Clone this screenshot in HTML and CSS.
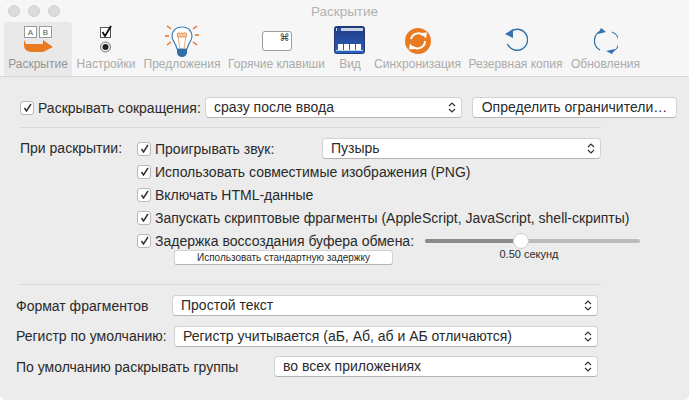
FILE: index.html
```html
<!DOCTYPE html>
<html lang="ru">
<head>
  <meta charset="UTF-8">
  <title>Раскрытие</title>
  <link rel="stylesheet" href="styles.css">
</head>
<body>
  <div class="window">
    <div class="titlebar">
      <div class="lights"><span></span><span></span><span></span></div>
      <div class="title">Раскрытие</div>
    </div>

    <div class="toolbar">
      <div class="tab active">
        <svg class="icon" width="32" height="32" viewBox="0 0 32 32">
          <rect x="2.5" y="1.5" width="12" height="11" fill="#fff" stroke="#9a9a9a"/>
          <rect x="17.5" y="1.5" width="12" height="11" fill="#fff" stroke="#9a9a9a"/>
          <text x="8.5" y="10" class="key-letter">A</text>
          <text x="23.5" y="10" class="key-letter">B</text>
          <path d="M2 15 L4 19 L21 19 L21 15 L31 22 L21 27 L21 27 L10 27 Q2 27 2 20 Z" fill="#e87a22"/>
        </svg>
        <span>Раскрытие</span>
      </div>
      <div class="tab">
        <svg class="icon" width="14" height="32" viewBox="0 0 14 32">
          <rect x="1.5" y="2.5" width="10" height="10" fill="#fff" stroke="#555"/>
          <path d="M3.5 7 L6 11 L12 1" fill="none" stroke="#111" stroke-width="1.8"/>
          <circle cx="6.5" cy="22" r="5" fill="#eee" stroke="#777"/>
          <circle cx="6.5" cy="22" r="3" fill="#222"/>
        </svg>
        <span>Настройки</span>
      </div>
      <div class="tab">
        <svg class="icon" width="34" height="34" viewBox="0 0 34 34">
          <path d="M17 3 C10 3 7 8 7 12 C7 17 11 19 12 25 L22 25 C23 19 27 17 27 12 C27 8 24 3 17 3 Z" fill="#fff" stroke="#3f7fb5" stroke-width="1.2"/>
          <path d="M13 12 L15 25 M21 12 L19 25" stroke="#f0a878" fill="none"/>
          <path d="M12 10 Q14 7 15 10 Q17 7 18 10 Q20 7 22 10 L21 13 L13 13 Z" fill="#f6c9a8" stroke="#e87a22" stroke-width="0.7"/>
          <path d="M12 25 L22 25 L22 29 Q21 33 17 33 Q13 33 12 29 Z" fill="#2f6fa8"/>
          <path d="M2 2 L6 5 M32 2 L28 5 M0 12 L4 12 M30 11 L34 11 M2 21 L6 18 M32 21 L28 18" stroke="#e8702a" stroke-width="1.4" fill="none"/>
        </svg>
        <span>Предложения</span>
      </div>
      <div class="tab">
        <svg class="icon" width="30" height="32" viewBox="0 0 30 32">
          <rect x="0.5" y="6.5" width="29" height="19" rx="2.5" fill="#fff" stroke="#9c9c9c"/>
          <text x="22.5" y="16" class="cmd">⌘</text>
        </svg>
        <span>Горячие клавиши</span>
      </div>
      <div class="tab">
        <svg class="icon" width="32" height="32" viewBox="0 0 32 32">
          <defs>
            <linearGradient id="viewBg" x1="0" y1="0" x2="0" y2="1">
              <stop offset="0" stop-color="#1f3a80"/>
              <stop offset="1" stop-color="#2a62c0"/>
            </linearGradient>
          </defs>
          <rect x="0.5" y="1.5" width="30" height="27" rx="2" fill="url(#viewBg)" stroke="#1e3a70"/>
          <rect x="2" y="3" width="27" height="3" fill="#c8d2e6"/>
          <rect x="3" y="3" width="4" height="3" fill="#2a4ab0"/>
          <rect x="4" y="19" width="5" height="6" fill="#fff"/>
          <rect x="10" y="19" width="5" height="6" fill="#fff"/>
          <rect x="16" y="19" width="5" height="6" fill="#fff"/>
          <rect x="22" y="19" width="5" height="6" fill="#fff"/>
          <rect x="2" y="25" width="27" height="1" fill="#b8cdf0"/>
        </svg>
        <span>Вид</span>
      </div>
      <div class="tab">
        <svg class="icon" width="26" height="32" viewBox="0 0 26 32">
          <circle cx="13" cy="16" r="13" fill="#e87a22"/>
          <path d="M6 14 A7.5 7.5 0 0 1 18.5 10.5" fill="none" stroke="#fff" stroke-width="2"/>
          <path d="M20 16 A7.5 7.5 0 0 1 7.5 21.5" fill="none" stroke="#fff" stroke-width="2"/>
          <path d="M16 8 L22 7.5 L21 13.5 Z" fill="#fff"/>
          <path d="M10 24 L4 24.5 L5 18.5 Z" fill="#fff"/>
        </svg>
        <span>Синхронизация</span>
      </div>
      <div class="tab">
        <svg class="icon" width="24" height="32" viewBox="0 0 24 32">
          <path d="M6 8 A10.5 10.5 0 1 1 3.5 20" fill="none" stroke="#3273ad" stroke-width="1.4" transform="translate(0 -1)"/>
          <path d="M1 9 L9 4 L9 13 Z" fill="#3273ad"/>
        </svg>
        <span>Резервная копия</span>
      </div>
      <div class="tab">
        <svg class="icon" width="24" height="32" viewBox="0 0 24 32">
          <path d="M7 6 A10.5 10.5 0 0 0 6 25" fill="none" stroke="#3273ad" stroke-width="1.3"/>
          <path d="M17 27 A10.5 10.5 0 0 0 18 7" fill="none" stroke="#3273ad" stroke-width="1.3"/>
          <path d="M4 9 L7 3 L12 7 Z" fill="#3273ad"/>
          <path d="M20 24 L17 29 L11 26 Z" fill="#3273ad" transform="translate(1 0)"/>
        </svg>
        <span>Обновления</span>
      </div>
    </div>

    <div class="content">
      <div class="row top-row">
        <span class="check"><svg width="9" height="9" viewBox="0 0 9 9"><path d="M1.5 5 L3.5 8 L8 1"/></svg></span>
        <span class="check-label top-label">Раскрывать сокращения:</span>
        <div class="select select-when">сразу после ввода<svg class="updown" width="8" height="13" viewBox="0 0 8 13"><path d="M1 5 L4 2 L7 5 M1 8 L4 11 L7 8"/></svg></div>
        <div class="button">Определить ограничители…</div>
      </div>

      <hr class="divider">

      <div class="options">
        <div class="options-label">При раскрытии:</div>
        <div class="options-list">
          <div class="row option">
            <span class="check"><svg width="9" height="9" viewBox="0 0 9 9"><path d="M1.5 5 L3.5 8 L8 1"/></svg></span>
            <span class="check-label sound-label">Проигрывать звук:</span>
            <div class="select select-sound">Пузырь<svg class="updown" width="8" height="13" viewBox="0 0 8 13"><path d="M1 5 L4 2 L7 5 M1 8 L4 11 L7 8"/></svg></div>
          </div>
          <div class="row option">
            <span class="check"><svg width="9" height="9" viewBox="0 0 9 9"><path d="M1.5 5 L3.5 8 L8 1"/></svg></span>
            <span class="check-label">Использовать совместимые изображения (PNG)</span>
          </div>
          <div class="row option">
            <span class="check"><svg width="9" height="9" viewBox="0 0 9 9"><path d="M1.5 5 L3.5 8 L8 1"/></svg></span>
            <span class="check-label">Включать HTML-данные</span>
          </div>
          <div class="row option">
            <span class="check"><svg width="9" height="9" viewBox="0 0 9 9"><path d="M1.5 5 L3.5 8 L8 1"/></svg></span>
            <span class="check-label">Запускать скриптовые фрагменты (AppleScript, JavaScript, shell-скрипты)</span>
          </div>
          <div class="delay">
            <div class="delay-left">
              <div class="row option">
                <span class="check"><svg width="9" height="9" viewBox="0 0 9 9"><path d="M1.5 5 L3.5 8 L8 1"/></svg></span>
                <span class="check-label">Задержка воссоздания буфера обмена:</span>
              </div>
              <div class="small-button">Использовать стандартную задержку</div>
            </div>
            <div class="delay-right">
              <div class="slider">
                <div class="slider-fill"></div>
                <div class="slider-knob"></div>
              </div>
              <div class="slider-value">0.50 секунд</div>
            </div>
          </div>
        </div>
      </div>

      <hr class="divider lower">

      <div class="format-rows">
        <div class="row format-row">
          <span class="format-label label-format">Формат фрагментов</span>
          <div class="select">Простой текст<svg class="updown" width="8" height="13" viewBox="0 0 8 13"><path d="M1 5 L4 2 L7 5 M1 8 L4 11 L7 8"/></svg></div>
        </div>
        <div class="row format-row">
          <span class="format-label label-case">Регистр по умолчанию:</span>
          <div class="select">Регистр учитывается (аБ, Аб, аб и АБ отличаются)<svg class="updown" width="8" height="13" viewBox="0 0 8 13"><path d="M1 5 L4 2 L7 5 M1 8 L4 11 L7 8"/></svg></div>
        </div>
        <div class="row format-row">
          <span class="format-label label-group">По умолчанию раскрывать группы</span>
          <div class="select">во всех приложениях<svg class="updown" width="8" height="13" viewBox="0 0 8 13"><path d="M1 5 L4 2 L7 5 M1 8 L4 11 L7 8"/></svg></div>
        </div>
      </div>
    </div>
  </div>
</body>
</html>
```
FILE: styles.css
```css
* {
  margin: 0;
  padding: 0;
  box-sizing: border-box;
}
html, body {
  width: 689px;
  height: 400px;
  overflow: hidden;
  background: #fff;
}
body {
  font-family: "Liberation Sans", Arial, sans-serif;
  font-size: 14px;
  color: #2a2a2a;
}
.window {
  width: 689px;
  height: 400px;
  background: #ececec;
  border-radius: 5px;
  overflow: hidden;
}

/* Title bar */
.titlebar {
  height: 22px;
  background: #f6f6f6;
  display: flex;
  align-items: center;
  position: relative;
}
.lights {
  display: flex;
  gap: 8px;
  padding-left: 8px;
}
.lights span {
  width: 12px;
  height: 12px;
  border-radius: 50%;
  background: #dcdcdc;
  border: 1px solid #d0d0d0;
}
.title {
  position: absolute;
  left: 0;
  right: 0;
  text-align: center;
  color: #b2b2b2;
  font-size: 13.5px;
}

/* Toolbar */
.toolbar {
  height: 55px;
  background: #f6f6f6;
  border-bottom: 1px solid #d4d4d4;
  display: grid;
  grid-template-columns: 68px 68px 84px 105px 42px 93px 103px 77px;
  padding-left: 4px;
}
.tab {
  display: flex;
  flex-direction: column;
  align-items: center;
  color: #ababab;
  font-size: 12px;
  white-space: nowrap;
  border-radius: 4px 4px 0 0;
}
.tab.active {
  background: #e9e9e9;
  color: #959595;
}
.tab .icon {
  height: 34px;
  margin-top: 2px;
  margin-bottom: -1px;
}
.key-letter {
  font-size: 8px;
  text-anchor: middle;
  fill: #555;
  font-family: "Liberation Sans", sans-serif;
}
.cmd {
  font-size: 10px;
  text-anchor: middle;
  fill: #333;
  font-family: "DejaVu Sans", sans-serif;
}

/* Shared controls */
.row {
  display: flex;
  align-items: center;
}
.check {
  flex: none;
  width: 14px;
  height: 14px;
  background: #fff;
  border: 1px solid #b8b8b8;
  border-radius: 3px;
  display: flex;
  align-items: center;
  justify-content: center;
}
.check svg path {
  fill: none;
  stroke: #333;
  stroke-width: 1.5;
}
.check-label {
  margin-left: 4px;
  white-space: nowrap;
}
.select, .button, .small-button {
  background: #fff;
  border: 1px solid #d2d2d2;
  border-bottom-color: #b4b4b4;
  border-radius: 4px;
  white-space: nowrap;
}
.select {
  flex: 1;
  height: 21px;
  line-height: 19px;
  padding-left: 8px;
  position: relative;
}
.updown {
  position: absolute;
  right: 5px;
  top: 3px;
}
.updown path {
  fill: none;
  stroke: #333;
  stroke-width: 1.2;
}
.button {
  height: 21px;
  line-height: 19px;
  text-align: center;
  width: 205px;
  margin-left: 10px;
}
.divider {
  border: 0;
  border-top: 1px solid #dadada;
  width: 582px;
  margin-left: 19px;
}

/* Sections */
.content {
  padding-top: 20px;
}
.top-row {
  padding-left: 20px;
  height: 21px;
}
.top-label {
  width: 167px;
}
.select-when {
  flex: none;
  width: 257px;
}
.top-row + .divider {
  margin-top: 9px;
}
.options {
  display: flex;
  padding-left: 20px;
  margin-top: 9px;
}
.options-label {
  width: 117px;
  line-height: 23px;
}
.option {
  height: 23px;
}
.sound-label {
  width: 167px;
}
.select-sound {
  flex: none;
  width: 279px;
}
.delay {
  display: flex;
}
.delay-left {
  width: 288px;
}
.small-button {
  width: 219px;
  height: 15px;
  margin-left: 37px;
  margin-top: -2px;
  font-size: 10px;
  line-height: 13px;
  text-align: center;
  border-radius: 3px;
}
.delay-right {
  width: 215px;
  padding-top: 9.5px;
}
.slider {
  height: 4px;
  border-radius: 2px;
  background: #bcbcbc;
  position: relative;
}
.slider-fill {
  width: 45%;
  height: 4px;
  border-radius: 2px;
  background: #8c8c8c;
}
.slider-knob {
  position: absolute;
  left: 88px;
  top: -6px;
  width: 16px;
  height: 16px;
  border-radius: 50%;
  background: #fff;
  border: 1px solid #d0d0d0;
}
.slider-value {
  margin-top: 5.5px;
  font-size: 11px;
  text-align: center;
  width: 208px;
}
.divider.lower {
  margin-top: 19px;
}
.format-rows {
  width: 598px;
  padding: 10px 0 0 16px;
  display: flex;
  flex-direction: column;
  gap: 9.5px;
}
.format-label {
  flex: none;
  white-space: nowrap;
}
.label-format {
  width: 156px;
}
.label-case {
  width: 158px;
}
.label-group {
  width: 258px;
}
```
